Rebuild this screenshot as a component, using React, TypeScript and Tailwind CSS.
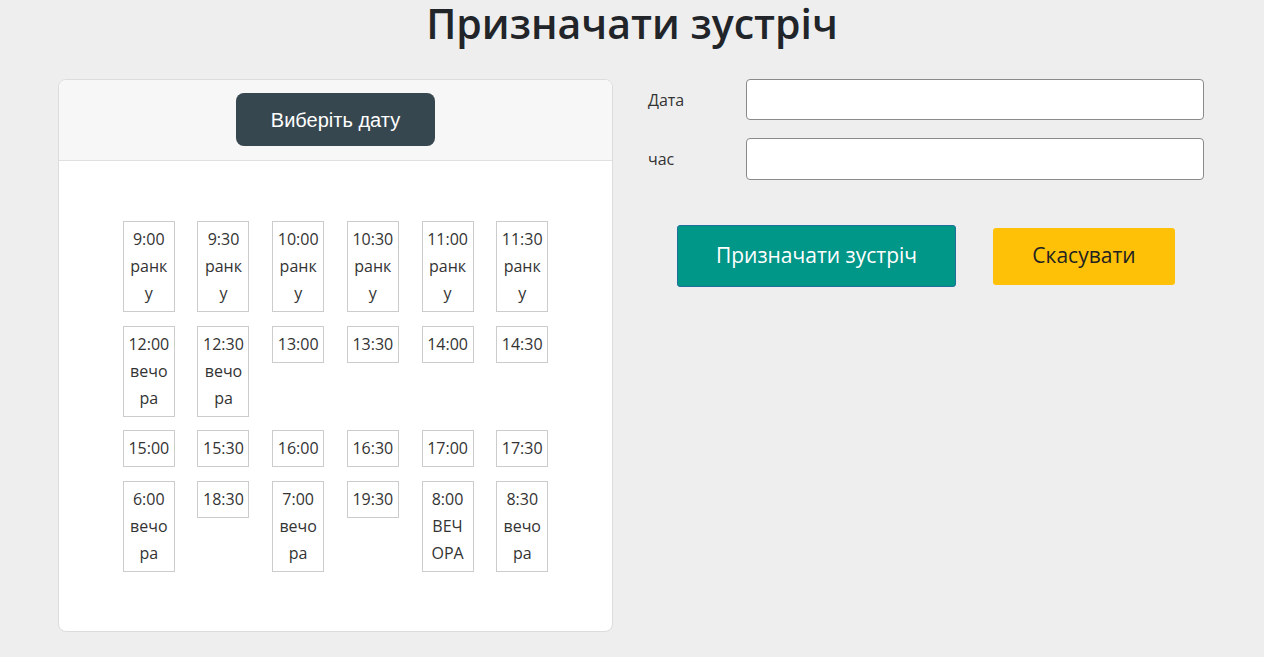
import React from 'react';

const slots: string[][] = [
  ['9:00', 'ранк', 'у'],
  ['9:30', 'ранк', 'у'],
  ['10:00', 'ранк', 'у'],
  ['10:30', 'ранк', 'у'],
  ['11:00', 'ранк', 'у'],
  ['11:30', 'ранк', 'у'],
  ['12:00', 'вечо', 'ра'],
  ['12:30', 'вечо', 'ра'],
  ['13:00'],
  ['13:30'],
  ['14:00'],
  ['14:30'],
  ['15:00'],
  ['15:30'],
  ['16:00'],
  ['16:30'],
  ['17:00'],
  ['17:30'],
  ['6:00', 'вечо', 'ра'],
  ['18:30'],
  ['7:00', 'вечо', 'ра'],
  ['19:30'],
  ['8:00', 'ВЕЧ', 'ОРА'],
  ['8:30', 'вечо', 'ра'],
];

export default function App() {
  return (
    <div className="min-h-[657px] w-full bg-[#eeeeee] text-[#212529] font-['Open_Sans','Noto_Sans',sans-serif] overflow-hidden">
      <h1 className="text-center text-[41px] font-semibold leading-[46px] text-[#212529]">
        Призначати зустріч
      </h1>

      <div className="flex items-start gap-[35px] pl-[58px] pt-[33px]">
        {/* Time picker card */}
        <div className="w-[555px] h-[553px] shrink-0 rounded-lg border border-[#dcdcdc] bg-white overflow-hidden">
          <div className="h-[81px] bg-[#f7f7f7] border-b border-[#e0e0e0] flex justify-center pt-[13px]">
            <button className="h-[53px] w-[199px] rounded-lg bg-[#37474f] text-white text-[20px] font-['Liberation_Sans',Arial,sans-serif]">
              Виберіть дату
            </button>
          </div>
          <div className="flex justify-center pt-[60px]">
            <div className="grid grid-cols-[repeat(6,52px)] gap-x-[22.7px] gap-y-[13.5px] items-start">
              {slots.map((lines, i) => (
                <div
                  key={i}
                  className="border border-[#cccccc] py-[4px] text-center text-[16px] leading-[27px] text-[#333333]"
                >
                  {lines.map((l, j) => (
                    <div key={j}>{l}</div>
                  ))}
                </div>
              ))}
            </div>
          </div>
        </div>

        {/* Form */}
        <div className="w-[556px]">
          <div className="flex items-center h-[41px]">
            <label className="w-[98px] text-[16px] text-[#333333]">Дата</label>
            <input className="h-[41px] w-[458px] rounded-[4px] border border-[#8a8a8a] bg-white" />
          </div>
          <div className="flex items-center h-[42px] mt-[18px]">
            <label className="w-[98px] text-[16px] text-[#333333]">час</label>
            <input className="h-[42px] w-[458px] rounded-[4px] border border-[#8a8a8a] bg-white" />
          </div>
          <div className="flex items-center mt-[45px] pl-[29px]">
            <button className="h-[62px] w-[279px] rounded-[3px] border border-[#1f6f9a] bg-[#009688] text-white text-[21px]">
              Призначати зустріч
            </button>
            <button className="ml-[37px] h-[57px] w-[182px] rounded-[3px] bg-[#ffc107] text-[#222222] text-[21px]">
              Скасувати
            </button>
          </div>
        </div>
      </div>
    </div>
  );
}
